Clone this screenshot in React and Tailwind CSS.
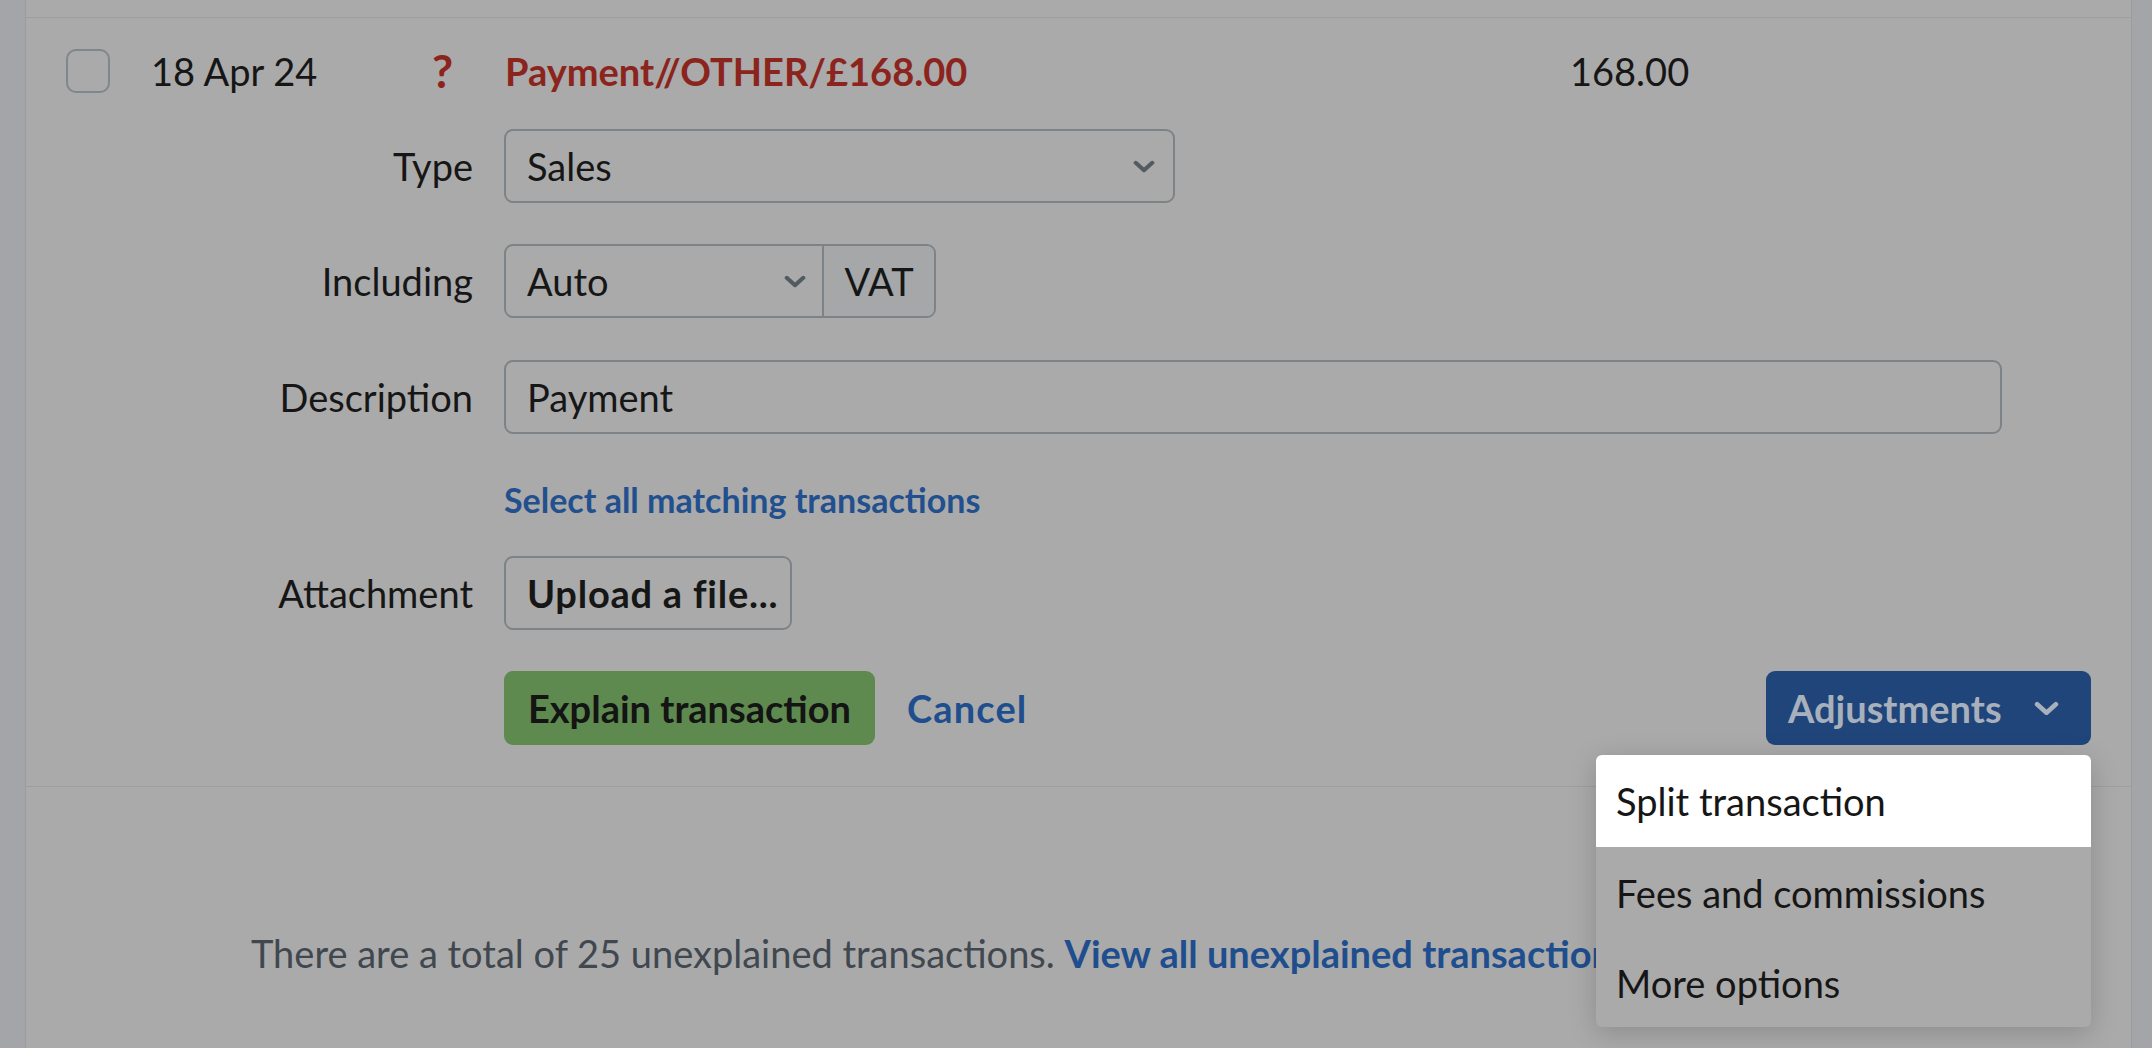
const font = { fontFamily: 'Lato, "Noto Sans", sans-serif' }

function Chevron({ className }) {
  return (
    <svg viewBox="0 0 24 14" className={className} fill="none" stroke="currentColor" strokeWidth="4.5" strokeLinecap="round" strokeLinejoin="round" aria-hidden="true">
      <path d="M3 3l9 8 9-8" />
    </svg>
  )
}

// right-aligned form label; its box ends where the inputs begin
function Label({ children }) {
  return <div className="w-[478px] shrink-0 pr-[31px] text-right text-[#161616]">{children}</div>
}

export default function App() {
  return (
    <div className="flex h-[1048px] w-full overflow-hidden bg-[#a3a5a8] text-[38px] leading-none" style={font}>
      <div className="w-[25px] shrink-0" />
      <main className="relative flex min-w-0 flex-1 flex-col border-x border-[#9a9ca0] bg-[#aaaaaa]">
        <div className="h-[18px] shrink-0 border-b border-[#9c9ea2]" />

        {/* transaction row */}
        <div className="mt-[31px] flex h-[44px] items-center pl-[40px]">
          <div className="h-[44px] w-[44px] shrink-0 rounded-[10px] border-2 border-[#80878b]" />
          <div className="ml-[41px] w-[281px] text-[#161616]">18 Apr 24</div>
          <div className="w-[73px] text-[46px] font-bold text-[#8c241e]">?</div>
          <div className="w-[1065px] font-bold text-[#8c241e]">Payment//OTHER/£168.00</div>
          <div className="text-[#161616]">168.00</div>
        </div>

        {/* explain form */}
        <div className="mt-[36px] flex flex-col">
          <div className="flex items-center">
            <Label>Type</Label>
            <div className="flex h-[74px] w-[671px] items-center justify-between rounded-[9px] border-2 border-[#7d8387] pl-[21px] pr-[18px] text-[#161616]">
              <span>Sales</span>
              <Chevron className="h-[13px] w-[22px] text-[#525b60]" />
            </div>
          </div>

          <div className="mt-[41px] flex items-center">
            <Label>Including</Label>
            <div className="flex h-[74px] w-[432px] overflow-hidden rounded-[9px] border-2 border-[#7d8387] text-[#161616]">
              <div className="flex w-[318px] items-center justify-between border-r-2 border-[#7d8387] pl-[21px] pr-[16px]">
                <span>Auto</span>
                <Chevron className="h-[13px] w-[22px] text-[#525b60]" />
              </div>
              <div className="flex flex-1 items-center justify-center bg-[#a5a7a9]">VAT</div>
            </div>
          </div>

          <div className="mt-[42px] flex items-center">
            <Label>Description</Label>
            <div className="flex h-[74px] w-[1498px] items-center rounded-[9px] border-2 border-[#7d8387] pl-[21px] text-[#161616]">
              Payment
            </div>
          </div>

          <div className="mt-[44px] flex h-[44px] items-center">
            <Label />
            <a className="text-[34px] font-bold text-[#22508f]">Select all matching transactions</a>
          </div>

          <div className="mt-[34px] flex items-center">
            <Label>Attachment</Label>
            <div className="flex h-[74px] w-[288px] items-center whitespace-nowrap rounded-[9px] border-2 border-[#7d8387] pl-[21px] font-bold tracking-[0.02em] text-[#161616]">
              Upload a file...
            </div>
          </div>

          <div className="mt-[41px] flex items-center pr-[40px]">
            <Label />
            <div className="flex h-[74px] w-[371px] items-center justify-center rounded-[9px] bg-[#5e8a50] font-bold text-[#141414]">
              Explain transaction
            </div>
            <a className="ml-[32px] font-bold tracking-[0.03em] text-[#1f4e8e]">Cancel</a>

            <div className="relative ml-auto">
              <div className="flex h-[74px] w-[325px] items-center justify-between rounded-[9px] bg-[#1f457b] pl-[22px] pr-[32px] font-bold text-[#a8b0bc]">
                <span>Adjustments</span>
                <Chevron className="h-[15px] w-[25px]" />
              </div>
              <div className="absolute right-0 top-full z-10 mt-[10px] w-[495px] rounded-[6px] bg-[#aaaaaa] text-[#161616] shadow-[0_6px_28px_rgba(0,0,0,0.18)]">
                <div className="flex h-[92px] items-center rounded-t-[6px] bg-white px-[20px]">Split transaction</div>
                <div className="flex h-[91px] items-center px-[20px]">Fees and commissions</div>
                <div className="flex h-[89px] items-center px-[20px]">More options</div>
              </div>
            </div>
          </div>
        </div>

        <div className="mt-[41px] border-b border-[#9c9ea2]" />

        <div className="mt-[147px] whitespace-nowrap pl-[225px] text-[#40474f]">
          There are a total of 25 unexplained transactions.{' '}
          <a className="font-bold text-[#1f4e8e]">View all unexplained transactions</a>
        </div>
      </main>
      <div className="w-[20px] shrink-0" />
    </div>
  )
}
